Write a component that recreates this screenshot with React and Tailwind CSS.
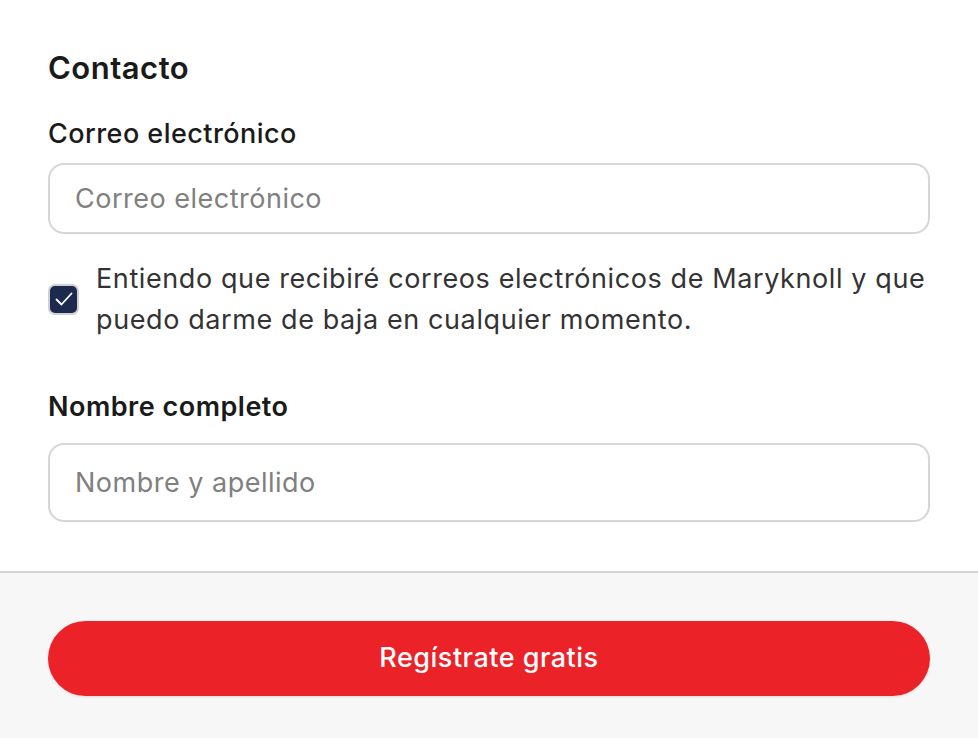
import { useState } from 'react';

export default function App() {
  const [agree, setAgree] = useState(true);

  return (
    <div className="min-h-screen bg-white flex flex-col" style={{ fontFamily: 'Inter, "Noto Sans", sans-serif' }}>
      <div className="px-12 pt-[46px] pb-[49px]">
        <h2 className="text-[31px] leading-[44px] font-semibold tracking-[0.5px] text-[#1a1a1a]">Contacto</h2>

        <label className="block mt-[24px] text-[27px] leading-[40px] font-medium tracking-[0.45px] text-[#1a1a1a]">
          Correo electrónico
        </label>
        <input
          type="email"
          placeholder="Correo electrónico"
          className="mt-[9px] w-full h-[71px] rounded-[16px] border-2 border-[#d6d6d6] px-[25px] text-[27px] tracking-[0.5px] text-[#1a1a1a] placeholder:text-[#808080] outline-none"
        />

        <label className="mt-[24px] flex items-center gap-[17px] cursor-pointer">
          <span
            onClick={() => setAgree(!agree)}
            className="shrink-0 w-[31px] h-[31px] rounded-[7px] border-2 border-[#d0d0d0] bg-[#1b2a4e] flex items-center justify-center"
          >
            {agree && (
              <svg width="22" height="22" viewBox="0 0 22 22" fill="none">
                <path d="M3.5 11.5l5 5L18.5 5.5" stroke="white" strokeWidth="1.8" strokeLinecap="round" strokeLinejoin="round" />
              </svg>
            )}
          </span>
          <span className="text-[27px] leading-[41px] tracking-[0.6px] text-[#333333]">
            Entiendo que recibiré correos electrónicos de Maryknoll y que puedo darme de baja en cualquier momento.
          </span>
        </label>

        <label className="block mt-[47px] text-[27px] leading-[40px] font-semibold tracking-[0.5px] text-[#1a1a1a]">
          Nombre completo
        </label>
        <input
          type="text"
          placeholder="Nombre y apellido"
          className="mt-[16px] w-full h-[79px] rounded-[16px] border-2 border-[#d6d6d6] px-[25px] text-[27px] tracking-[0.5px] text-[#1a1a1a] placeholder:text-[#808080] outline-none"
        />
      </div>

      <div className="flex-1 border-t-2 border-[#d4d4d4] bg-[#f7f7f7] px-12 pt-[48px] pb-[42px]">
        <button className="w-full h-[75px] rounded-full bg-[#ec2229] text-white text-[27px] font-medium tracking-[0.5px] shadow-sm">
          Regístrate gratis
        </button>
      </div>
    </div>
  );
}
